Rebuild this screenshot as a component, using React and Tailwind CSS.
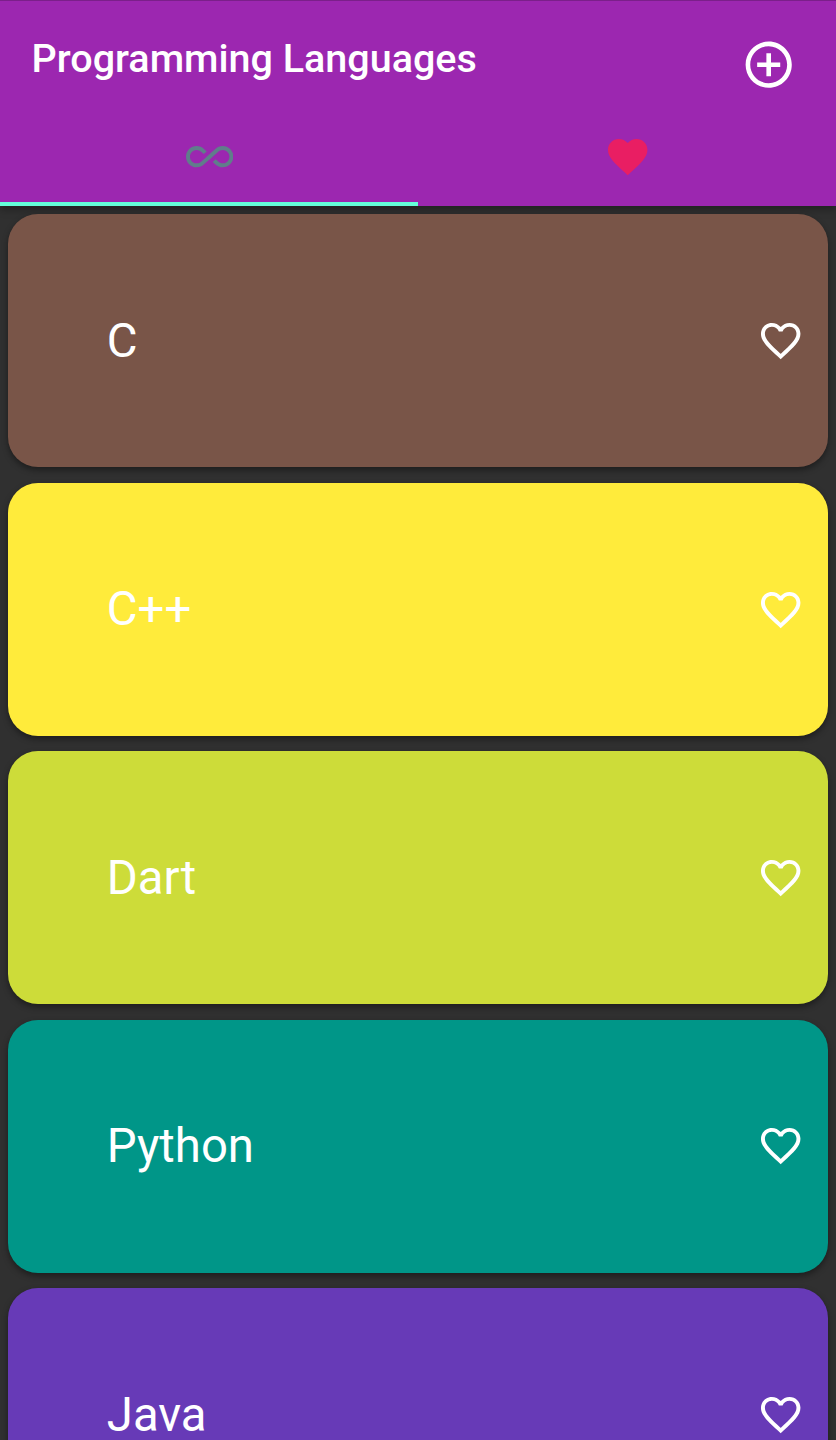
const languages = [
  { name: 'C', color: 'bg-[#795548]' },
  { name: 'C++', color: 'bg-[#ffeb3b]' },
  { name: 'Dart', color: 'bg-[#cddc39]' },
  { name: 'Python', color: 'bg-[#009688]' },
  { name: 'Java', color: 'bg-[#673ab7]' },
];

function Icon({ d, className = 'size-[47.4px]' }) {
  return (
    <svg viewBox="0 0 24 24" fill="currentColor" className={`shrink-0 ${className}`}>
      <path d={d} />
    </svg>
  );
}

const HEART = 'M12 21.35l-1.45-1.32C5.4 15.36 2 12.28 2 8.5 2 5.42 4.42 3 7.5 3c1.74 0 3.41.81 4.5 2.09C13.09 3.81 14.76 3 16.5 3 19.58 3 22 5.42 22 8.5c0 3.78-3.4 6.86-8.55 11.54L12 21.35z';
const HEART_OUTLINE = 'M16.5 3c-1.74 0-3.41.81-4.5 2.09C10.91 3.81 9.24 3 7.5 3 4.42 3 2 5.42 2 8.5c0 3.78 3.4 6.86 8.55 11.54L12 21.35l1.45-1.32C18.6 15.36 22 12.28 22 8.5 22 5.42 19.58 3 16.5 3zm-4.4 15.55l-.1.1-.1-.1C7.14 14.24 4 11.39 4 8.5 4 6.5 5.5 5 7.5 5c1.54 0 3.04.99 3.57 2.36h1.87C13.46 5.99 14.96 5 16.5 5c2 0 3.5 1.5 3.5 3.5 0 2.89-3.14 5.74-7.9 10.05z';
const ADD = 'M13 7h-2v4H7v2h4v4h2v-4h4v-2h-4V7zm-1-5C6.48 2 2 6.48 2 12s4.48 10 10 10 10-4.48 10-10S17.52 2 12 2zm0 18c-4.41 0-8-3.59-8-8s3.59-8 8-8 8 3.59 8 8-3.59 8-8 8z';
const INFINITY = 'M18.6 6.62c-1.44 0-2.8.56-3.77 1.53L12 10.66 10.48 12h.01L7.8 14.39c-.64.64-1.49.99-2.4.99-1.87 0-3.39-1.51-3.39-3.38S3.53 8.62 5.4 8.62c.91 0 1.76.35 2.44 1.03l1.13 1 1.51-1.34L9.22 8.2C8.2 7.18 6.84 6.62 5.4 6.62 2.42 6.62 0 9.04 0 12s2.42 5.38 5.4 5.38c1.44 0 2.8-.56 3.77-1.53l2.83-2.5.01.01L13.52 12h-.01l2.69-2.39c.64-.64 1.49-.99 2.4-.99 1.87 0 3.39 1.51 3.39 3.38s-1.52 3.38-3.39 3.38c-.9 0-1.76-.35-2.44-1.03l-1.14-1.01-1.51 1.34 1.27 1.12c1.02 1.01 2.37 1.57 3.82 1.57 2.98 0 5.4-2.41 5.4-5.38s-2.42-5.37-5.4-5.37z';

export default function App() {
  return (
    <div className="h-[1440px] w-[836px] overflow-hidden bg-[#303030] font-['Roboto',sans-serif] text-white">
      <header className="flex h-[206.4px] flex-col border-t border-[#7b1f8a] bg-[#9c27b0] shadow-[0_3px_8px_rgba(0,0,0,0.35)]">
        <div className="flex h-[110.6px] shrink-0 justify-between pl-[31.6px] pr-[39.6px]">
          <h1 className="pt-[34px] text-[39.5px] font-medium leading-[47px] whitespace-nowrap">Programming Languages</h1>
          <button className="mt-[35.6px] flex size-[55.4px] items-center justify-center">
            <Icon d={ADD} className="size-[55.4px]" />
          </button>
        </div>
        <div className="grid grow grid-cols-2">
          <div className="flex flex-col text-[#607d8b]">
            <div className="flex grow items-center justify-center pl-px">
              <Icon d={INFINITY} />
            </div>
            <div className="h-[4px] shrink-0 bg-[#64ffda]" />
          </div>
          <div className="flex items-center justify-center pb-[4px] pl-px text-[#e91e63]">
            <Icon d={HEART} />
          </div>
        </div>
      </header>
      <main className="flex flex-col gap-[15.8px] px-[8px] pt-[8px]">
        {languages.map(({ name, color }) => (
          <div key={name} className={`flex h-[252.7px] shrink-0 items-center justify-between rounded-[30px] pl-[98.8px] pr-[23.7px] shadow-[0_3px_6px_rgba(0,0,0,0.4)] ${color}`}>
            <span className="text-[47.3px] leading-[56px]">{name}</span>
            <Icon d={HEART_OUTLINE} />
          </div>
        ))}
      </main>
    </div>
  );
}
